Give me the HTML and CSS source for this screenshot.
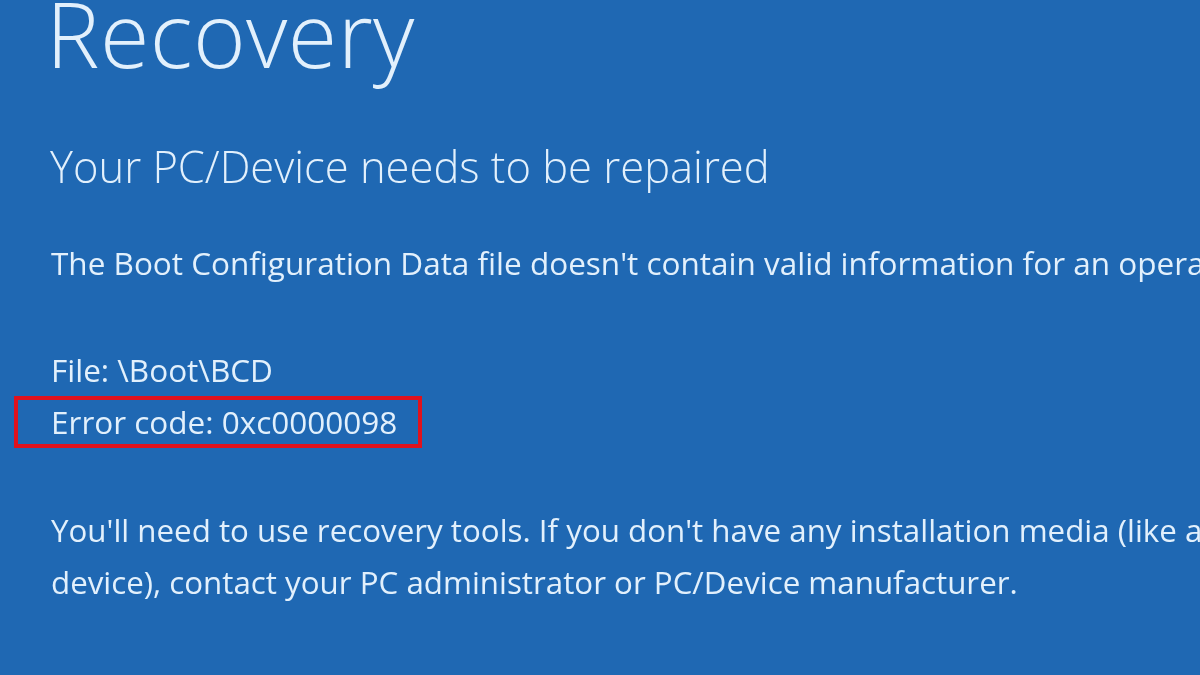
FILE: index.html
```html
<!DOCTYPE html>
<html lang="en">
<head>
<meta charset="utf-8">
<title>Recovery</title>
<link rel="stylesheet" href="styles.css">
</head>
<body>
<main class="screen">
  <h1 class="title">Recovery</h1>
  <h2 class="subtitle">Your PC/Device needs to be repaired</h2>
  <p class="text msg">The Boot Configuration Data file doesn't contain valid information for an operating system.</p>
  <div class="details">
    <p class="line">File: \Boot\BCD</p>
    <p class="line error">Error code: 0xc0000098</p>
  </div>
  <p class="text para">You'll need to use recovery tools. If you don't have any installation media (like a disc or USB<br>device), contact your PC administrator or PC/Device manufacturer.</p>
</main>
</body>
</html>
```

FILE: styles.css
```css
html, body {
  margin: 0;
  padding: 0;
  width: 1200px;
  height: 675px;
  overflow: hidden;
  background: #1f68b3;
}
.screen {
  display: flex;
  flex-direction: column;
  align-items: flex-start;
  padding-left: 46px;
  font-family: "Open Sans", "Noto Sans", sans-serif;
  color: #e2f0fc;
  white-space: nowrap;
  filter: blur(0.45px);
}
.title {
  margin: -12px 0 0 0;
  font-size: 90px;
  line-height: 90px;
  font-weight: 300;
  letter-spacing: 0.4px;
}
.subtitle {
  margin: 67px 0 0 4px;
  font-size: 43.5px;
  line-height: 43px;
  font-weight: 300;
}
.text {
  margin: 0;
  font-weight: 400;
}
.msg {
  margin: 60px 0 0 5px;
  font-size: 31.5px;
  line-height: 30px;
}
.details {
  margin-top: 66px;
  display: flex;
  flex-direction: column;
  align-items: flex-start;
}
.line {
  margin: 0 0 0 5px;
  font-size: 31.5px;
  line-height: 52px;
  font-weight: 400;
}
.error {
  margin-left: -32px;
  padding: 0 21px 0 33px;
  line-height: 44px;
  border: 4px solid #e0121d;
}
.para {
  margin: 56px 0 0 5px;
  font-size: 31.3px;
  line-height: 52px;
}
```
